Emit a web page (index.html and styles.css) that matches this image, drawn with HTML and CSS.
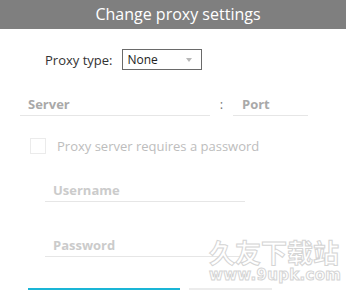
FILE: index.html
```html
<!DOCTYPE html>
<html lang="en">
<head>
    <meta charset="UTF-8">
    <meta name="viewport" content="width=device-width, initial-scale=1.0">
    <title>Change proxy settings</title>
    <link rel="stylesheet" href="styles.css">
</head>
<body>
    <div class="dialog">
        <div class="header">Change proxy settings</div>

        <div class="proxy-type">
            <label for="proxy-type">Proxy type:</label>
            <div class="select" id="proxy-type">
                <span>None</span>
                <span class="arrow"></span>
            </div>
        </div>

        <div class="server-row">
            <div class="field server">Server</div>
            <span class="colon">:</span>
            <div class="field port">Port</div>
        </div>

        <div class="auth-check">
            <span class="checkbox"></span>
            <span>Proxy server requires a password</span>
        </div>

        <div class="auth-fields">
            <div class="field disabled">Username</div>
            <div class="field disabled">Password</div>
        </div>

        <div class="buttons">
            <div class="btn btn-primary"></div>
            <div class="btn btn-cancel"></div>
        </div>

        <div class="watermark">
            <div class="wm-big">久友下载站</div>
            <div class="wm-small">www.9upk.com</div>
        </div>
    </div>
</body>
</html>
```

FILE: styles.css
```css
body {
    margin: 0;
    padding: 0;
    background-color: white;
    font-family: "Open Sans", "Noto Sans", sans-serif;
}
.dialog {
    position: relative;
    width: 346px;
    height: 290px;
    overflow: hidden;
}
.header {
    height: 29px;
    line-height: 29px;
    background-color: #7f7f7f;
    color: white;
    font-size: 16px;
    text-align: center;
    padding-left: 10px;
}
.proxy-type {
    display: flex;
    align-items: center;
    gap: 10px;
    padding-left: 45px;
    margin-top: 20px;
    font-size: 13px;
    color: #333;
}
.select {
    display: flex;
    align-items: center;
    justify-content: space-between;
    box-sizing: border-box;
    width: 80px;
    height: 21px;
    padding: 0 9px 0 4px;
    border: 1px solid #6a6a6a;
    font-size: 12px;
    color: #222;
}
.arrow {
    width: 0;
    height: 0;
    border-left: 3px solid transparent;
    border-right: 3px solid transparent;
    border-top: 4px solid #b8b8b8;
}
.field {
    box-sizing: border-box;
    height: 24px;
    line-height: 24px;
    border-bottom: 1px solid #e6e6e6;
    font-size: 13px;
    font-weight: bold;
    color: #a9a9a9;
    padding-left: 8px;
}
.server-row {
    display: flex;
    align-items: center;
    margin-top: 22px;
    padding-left: 20px;
}
.server {
    width: 190px;
}
.colon {
    width: 23px;
    text-align: center;
    font-size: 13px;
    color: #777;
}
.port {
    width: 75px;
    padding-left: 9px;
}
.auth-check {
    display: flex;
    align-items: center;
    gap: 11px;
    margin-top: 21px;
    padding-left: 30px;
    font-size: 13px;
    color: #bdbdbd;
}
.checkbox {
    box-sizing: border-box;
    width: 16px;
    height: 16px;
    border: 1px solid #ebebeb;
}
.auth-fields {
    display: flex;
    flex-direction: column;
    gap: 31px;
    margin-top: 23px;
    padding-left: 45px;
}
.auth-fields .field {
    width: 200px;
}
.field.disabled {
    color: #cbcbcb;
}
.buttons {
    display: flex;
    gap: 9px;
    margin-top: 31px;
    padding-left: 28px;
}
.btn {
    height: 30px;
}
.btn-primary {
    width: 152px;
    background-color: #1ab5d6;
}
.btn-cancel {
    width: 83px;
    background-color: #ececec;
}
.watermark {
    position: absolute;
    left: 209px;
    top: 236px;
    width: 130px;
    color: white;
    -webkit-text-stroke: 1px #d4d4d4;
    text-align: center;
    font-family: "Noto Sans CJK SC", sans-serif;
    font-weight: bold;
}
.wm-big {
    font-size: 26px;
    line-height: 31px;
}
.wm-small {
    font-size: 15px;
    line-height: 16px;
    font-family: "DejaVu Sans", sans-serif;
    letter-spacing: 0.3px;
}
```
